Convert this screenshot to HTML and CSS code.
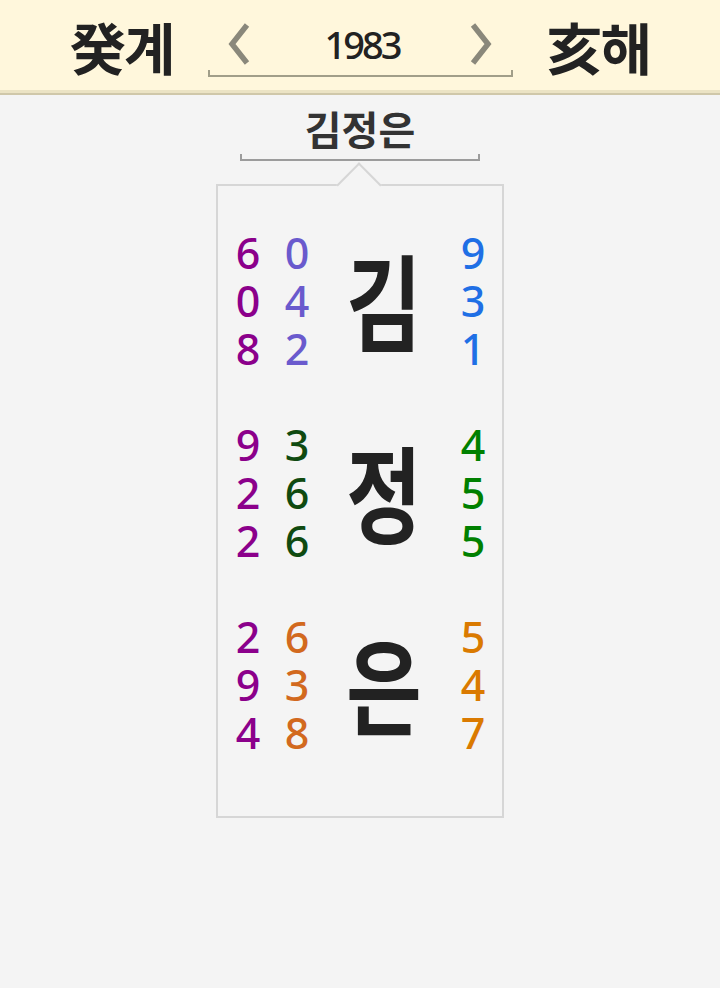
FILE: index.html
```html
<!DOCTYPE html>
<html lang="ko">
<head>
<meta charset="utf-8">
<title>김정은</title>
<link rel="stylesheet" href="styles.css">
</head>
<body>
<header class="top">
  <div class="gz">癸계</div>
  <div class="year-nav">
    <div class="year-row">
      <svg class="chev" width="24" height="42" viewBox="0 0 24 42"><polyline points="20,2 5,21 20,40" fill="none" stroke="#8a887b" stroke-width="5.5"/></svg>
      <span class="year">1983</span>
      <svg class="chev" width="24" height="42" viewBox="0 0 24 42"><polyline points="4,2 19,21 4,40" fill="none" stroke="#8a887b" stroke-width="5.5"/></svg>
    </div>
    <div class="bracket bracket-year"></div>
  </div>
  <div class="gz">亥해</div>
</header>

<main class="page">
  <div class="name-block">
    <div class="name">김정은</div>
    <div class="bracket bracket-name"></div>
  </div>

  <section class="card">
    <div class="notch"></div>

    <div class="group">
      <div class="col c-purple"><span>6</span><span>0</span><span>8</span></div>
      <div class="col c-slate"><span>0</span><span>4</span><span>2</span></div>
      <div class="syl">김</div>
      <div class="col c-blue"><span>9</span><span>3</span><span>1</span></div>
    </div>

    <div class="group">
      <div class="col c-purple"><span>9</span><span>2</span><span>2</span></div>
      <div class="col c-dgreen"><span>3</span><span>6</span><span>6</span></div>
      <div class="syl">정</div>
      <div class="col c-green"><span>4</span><span>5</span><span>5</span></div>
    </div>

    <div class="group">
      <div class="col c-purple"><span>2</span><span>9</span><span>4</span></div>
      <div class="col c-choc"><span>6</span><span>3</span><span>8</span></div>
      <div class="syl">은</div>
      <div class="col c-orange"><span>5</span><span>4</span><span>7</span></div>
    </div>
  </section>
</main>
</body>
</html>
```

FILE: styles.css
```css
html, body {
  margin: 0;
  padding: 0;
}
body {
  background: #f4f4f4;
  width: 720px;
  min-height: 988px;
  font-family: "Noto Sans CJK KR", "Noto Sans", sans-serif;
  color: #222;
}

.top {
  height: 90px;
  background: #fff7dc;
  border-bottom: 3px solid #ebe3c4;
  box-shadow: 0 2px 0 #cfc7a9;
  display: flex;
  justify-content: center;
  align-items: flex-start;
  gap: 34px;
}

.gz {
  font-family: "Noto Sans CJK KR", sans-serif;
  font-weight: 700;
  font-size: 56px;
  line-height: 92px;
  letter-spacing: -2px;
  color: #222;
}

.year-nav {
  width: 305px;
  padding-top: 18px;
}
.year-row {
  height: 52px;
  display: flex;
  justify-content: space-between;
  align-items: center;
  padding: 0 19px;
}
.chev {
  display: block;
}
.year {
  font-family: "Noto Sans", sans-serif;
  font-weight: 500;
  font-size: 38px;
  letter-spacing: -3px;
  line-height: 52px;
  color: #222;
  margin-left: 4px;
}

.bracket {
  height: 5px;
  border: 2px solid #a19e89;
  border-top: none;
}
.bracket-name {
  border-color: #9c9c9c;
  width: 236px;
  margin: 0 auto;
}

.page {
  display: flex;
  flex-direction: column;
  align-items: center;
}

.name-block {
  padding-top: 9px;
  width: 240px;
}
.name {
  text-align: center;
  font-family: "Noto Sans CJK KR", sans-serif;
  font-weight: 700;
  font-size: 40px;
  line-height: 52px;
  color: #333;
}

.card {
  position: relative;
  box-sizing: border-box;
  margin-top: 23px;
  width: 288px;
  height: 634px;
  border: 2px solid #d6d6d6;
  padding: 46px 9px 0 10px;
  display: flex;
  flex-direction: column;
  gap: 48px;
}
.notch {
  position: absolute;
  left: 125px;
  top: -17px;
  width: 32px;
  height: 32px;
  box-sizing: border-box;
  background: #f4f4f4;
  border-top: 2px solid #d6d6d6;
  border-left: 2px solid #d6d6d6;
  transform: rotate(45deg);
}

.group {
  display: grid;
  grid-template-columns: 40px 40px 118px 40px;
  column-gap: 9px;
  align-items: center;
  height: 144px;
}
.col {
  display: flex;
  flex-direction: column;
  align-items: center;
  font-family: "Noto Sans", sans-serif;
  font-weight: 500;
  font-size: 43px;
}
.col span {
  display: block;
  height: 48px;
  line-height: 42px;
}
.syl {
  text-align: center;
  font-family: "Noto Sans CJK KR", sans-serif;
  font-weight: 700;
  font-size: 105px;
  line-height: 130px;
  padding-bottom: 14px;
  margin-right: 2px;
  color: #222;
  transform: scaleX(0.78);
}

.c-purple { color: #8b008b; }
.c-slate  { color: #6a5acd; }
.c-blue   { color: #1f6fe5; }
.c-dgreen { color: #0f4a10; }
.c-green  { color: #008000; }
.c-choc   { color: #d2691e; }
.c-orange { color: #da7a00; }
```
